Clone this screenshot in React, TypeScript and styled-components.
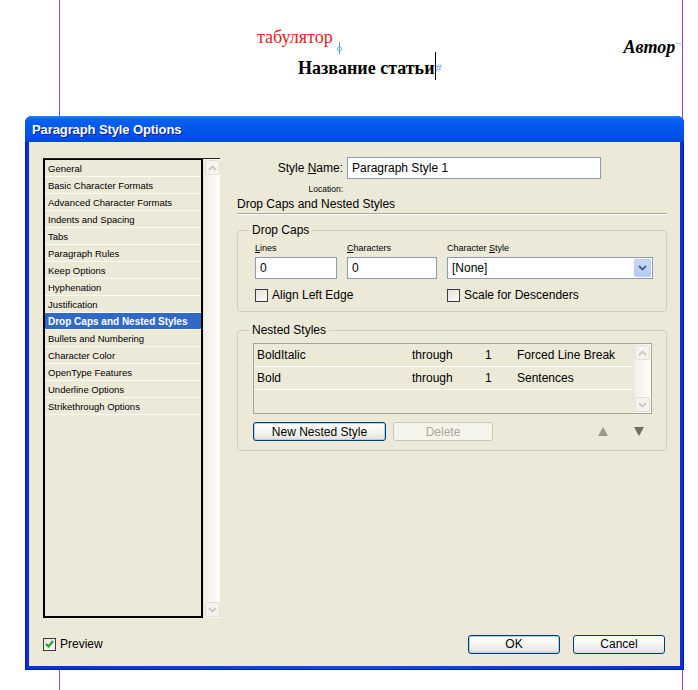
import styled, { createGlobalStyle } from "styled-components";

const SECTIONS = [
  "General",
  "Basic Character Formats",
  "Advanced Character Formats",
  "Indents and Spacing",
  "Tabs",
  "Paragraph Rules",
  "Keep Options",
  "Hyphenation",
  "Justification",
  "Drop Caps and Nested Styles",
  "Bullets and Numbering",
  "Character Color",
  "OpenType Features",
  "Underline Options",
  "Strikethrough Options",
];

const NESTED = [
  { style: "BoldItalic", mode: "through", count: "1", unit: "Forced Line Break" },
  { style: "Bold", mode: "through", count: "1", unit: "Sentences" },
];

const UI_FONT = `"Liberation Sans", Arial, sans-serif`;
const BEIGE = "#ECE9D8";

const GlobalStyle = createGlobalStyle`
  html, body {
    margin: 0;
    padding: 0;
    background: #fff;
  }
  body {
    width: 698px;
    height: 690px;
    overflow: hidden;
    font-family: ${UI_FONT};
  }
`;

const Page = styled.div`
  position: relative;
  width: 698px;
  height: 690px;
`;

/* the InDesign page behind the dialog */
const Sheet = styled.div`
  box-sizing: border-box;
  margin-left: 59px;
  width: 624px;
  height: 690px;
  border-left: 1px solid #8a46d8;
  border-right: 1px solid #8a46d8;
  padding-top: 27px;
  font-family: "Liberation Serif", "Times New Roman", serif;
`;

const TextLine = styled.div<{ $indent: number; $height?: number }>`
  display: flex;
  align-items: flex-start;
  padding-left: ${(p) => p.$indent}px;
  height: ${(p) => (p.$height ? `${p.$height}px` : "auto")};
`;

const TabText = styled.span`
  color: #e31b23;
  font-size: 18px;
  line-height: 20px;
`;

const TabMark = styled.span`
  display: block;
  margin: 15px 0 0 4px;
  line-height: 0;
`;

const Spacer = styled.div`
  flex: 1;
`;

const AuthorText = styled.span`
  margin-top: 10px;
  font-size: 18px;
  line-height: 20px;
  font-weight: bold;
  font-style: italic;
`;

const EndMark = styled.span`
  margin-top: 12px;
  color: #6fa0e8;
  font-size: 10px;
  line-height: 10px;
  padding-right: 1px;
`;

const TitleText = styled.span`
  font-size: 18px;
  line-height: 20px;
  font-weight: bold;
`;

const Caret = styled.span`
  display: block;
  width: 1px;
  height: 28px;
  margin-top: -6px;
  background: #000;
`;

const StoryEnd = styled.span`
  color: #7aa6ea;
  font-size: 12px;
  line-height: 20px;
  font-style: italic;
`;

/* the dialog window floating over the page */
const Window = styled.div`
  position: absolute;
  left: 25px;
  top: 116px;
  width: 659px;
  height: 554px;
  box-sizing: border-box;
  display: flex;
  flex-direction: column;
  padding: 0 4px 4px;
  border-radius: 7px 7px 0 0;
  background: linear-gradient(to right, #0831d9, #0a4ee0 50%, #0831d9);
  box-shadow: inset 1px 0 0 #0019cf, inset -1px 0 0 #001ea0, inset 0 -1px 0 #001ea0;
`;

const TitleBar = styled.div`
  height: 26px;
  margin: 0 -4px;
  padding: 0 7px;
  display: flex;
  align-items: center;
  border-radius: 7px 7px 0 0;
  background: linear-gradient(
    #2a83ff 0%,
    #0a62f0 12%,
    #0058ee 40%,
    #0054e6 70%,
    #0048d8 100%
  );
  color: #fff;
  font-family: ${UI_FONT};
  font-weight: bold;
  font-size: 13px;
  letter-spacing: -0.1px;
  text-shadow: 1px 1px 0 #0a1e8f;
`;

const Body = styled.div`
  flex: 1;
  display: flex;
  flex-direction: column;
  padding: 16px 13px 12px 14px;
  background: ${BEIGE};
  font-size: 12px;
  color: #000;
`;

const Main = styled.div`
  display: flex;
  gap: 17px;
  height: 460px;
`;

const Sidebar = styled.div`
  display: flex;
  width: 177px;
  border-top: 1px solid #222;
`;

const ListBox = styled.div`
  flex: 1;
  border: 2px solid #000;
  border-top-width: 1px;
  background: ${BEIGE};
`;

const ListRow = styled.div<{ $active?: boolean }>`
  box-sizing: border-box;
  height: 17px;
  padding-left: 3px;
  display: flex;
  align-items: center;
  border-bottom: 1px solid #fbfaf6;
  font-size: ${(p) => (p.$active ? "10px" : "9.5px")};
  white-space: nowrap;
  background: ${(p) => (p.$active ? "#316ac5" : "transparent")};
  color: ${(p) => (p.$active ? "#fff" : "#000")};
  font-weight: ${(p) => (p.$active ? "bold" : "normal")};
`;

const Scrollbar = styled.div<{ $width: number }>`
  width: ${(p) => p.$width}px;
  display: flex;
  flex-direction: column;
  justify-content: space-between;
  align-items: center;
  padding: 1px 0;
  box-sizing: border-box;
  background: linear-gradient(to right, #f1efe6, #fefefb);
  border-left: 1px solid #e8e6dc;
`;

const ScrollButton = styled.div`
  width: 15px;
  height: 15px;
  box-sizing: border-box;
  border: 1px solid #e2e0d6;
  border-radius: 2px;
  background: #f4f3ee;
  display: flex;
  align-items: center;
  justify-content: center;
`;

const Panel = styled.div`
  width: 430px;
  display: flex;
  flex-direction: column;
`;

const NameRow = styled.div`
  display: flex;
  align-items: center;
  gap: 4px;
  margin-top: -1px;
`;

const NameLabel = styled.span`
  width: 106px;
  text-align: right;
`;

const TextBox = styled.div<{ $width: number }>`
  box-sizing: border-box;
  width: ${(p) => p.$width}px;
  height: 22px;
  padding: 0 4px;
  display: flex;
  align-items: center;
  background: #fff;
  border: 1px solid #8c9cae;
  font-size: 12px;
  white-space: nowrap;
`;

const LocationRow = styled.div`
  margin-top: 5px;
  width: 106px;
  text-align: right;
  font-size: 8.5px;
  line-height: 10px;
`;

const Heading = styled.div`
  margin-top: 3px;
  line-height: 14px;
  padding-bottom: 2px;
  border-bottom: 1px solid #aca899;
  box-shadow: 0 1px 0 #fff;
`;

const Group = styled.div<{ $top: number; $left: number; $right: number; $bottom: number }>`
  margin-top: ${(p) => p.$top}px;
  padding: 0 ${(p) => p.$right}px ${(p) => p.$bottom}px ${(p) => p.$left}px;
  border: 1px solid #d0d0bf;
  border-radius: 4px;
  display: flex;
  flex-direction: column;
`;

const GroupTitle = styled.span<{ $shift: number }>`
  align-self: flex-start;
  margin: -8px 0 0 ${(p) => p.$shift}px;
  padding: 0 3px;
  line-height: 14px;
  background: ${BEIGE};
`;

const FieldRow = styled.div`
  display: flex;
  gap: 10px;
  margin-top: 6px;
`;

const Field = styled.div`
  display: flex;
  flex-direction: column;
  gap: 4px;
`;

const SmallLabel = styled.span`
  font-size: 9px;
  line-height: 10px;
`;

const SelectBox = styled.div`
  box-sizing: border-box;
  width: 206px;
  height: 22px;
  padding: 1px 1px 1px 4px;
  display: flex;
  align-items: center;
  justify-content: space-between;
  background: #fff;
  border: 1px solid #8c9cae;
`;

const DropButton = styled.div`
  width: 17px;
  height: 18px;
  box-sizing: border-box;
  border: 1px solid #b9c9ef;
  border-radius: 2px;
  background: linear-gradient(#c8d8fc, #b4c8f6);
  display: flex;
  align-items: center;
  justify-content: center;
`;

const CheckRow = styled.div`
  display: flex;
  margin-top: 8px;
  height: 16px;
  align-items: center;
`;

const CheckItem = styled.label<{ $width?: number }>`
  display: flex;
  align-items: center;
  gap: 4px;
  width: ${(p) => (p.$width ? `${p.$width}px` : "auto")};
`;

const CheckBox = styled.span`
  width: 13px;
  height: 13px;
  box-sizing: border-box;
  border: 1px solid #3b3b3b;
  background: linear-gradient(135deg, #e4e3dc, #fbfbf8);
  display: flex;
  align-items: center;
  justify-content: center;
`;

const Table = styled.div`
  margin-top: 6px;
  height: 71px;
  box-sizing: border-box;
  display: flex;
  border: 1px solid #a5a497;
  background: ${BEIGE};
`;

const TableRows = styled.div`
  flex: 1;
`;

const TableRow = styled.div`
  height: 23px;
  box-sizing: border-box;
  display: grid;
  grid-template-columns: 155px 73px 32px 1fr;
  align-items: center;
  padding-left: 3px;
  border-bottom: 1px solid #fff;
`;

const ButtonRow = styled.div`
  display: flex;
  align-items: center;
  gap: 7px;
  margin-top: 8px;
`;

const Button = styled.button<{ $width: number; $default?: boolean }>`
  width: ${(p) => p.$width}px;
  height: 19px;
  padding: 0;
  font-family: ${UI_FONT};
  font-size: 12px;
  color: #000;
  border: 1px solid #003c74;
  border-radius: 3px;
  background: linear-gradient(#ffffff, #f4f4f0 55%, #e3e0d6);
  box-shadow: ${(p) => (p.$default ? "inset 0 0 0 1px #b6cdf3" : "none")};

  &:disabled {
    color: #aca899;
    border-color: #cbc7b8;
    background: #f5f4ea;
  }
`;

const Arrows = styled.div`
  margin-left: auto;
  display: flex;
  gap: 26px;
  padding-right: 8px;
`;

const Footer = styled.div`
  margin-top: 16px;
  height: 20px;
  display: flex;
  align-items: center;
  justify-content: space-between;
`;

const FooterButtons = styled.div`
  display: flex;
  gap: 13px;
  margin-right: 2px;
`;

function Chevron({ up, color }: { up?: boolean; color: string }) {
  return (
    <svg width="9" height="6" viewBox="0 0 9 6">
      <path
        d={up ? "M1 5 L4.5 1.5 L8 5" : "M1 1 L4.5 4.5 L8 1"}
        fill="none"
        stroke={color}
        strokeWidth="1.8"
      />
    </svg>
  );
}

function Triangle({ up, color }: { up?: boolean; color: string }) {
  return (
    <svg width="10" height="9" viewBox="0 0 10 9">
      <polygon points={up ? "5,0 10,9 0,9" : "0,0 10,0 5,9"} fill={color} />
    </svg>
  );
}

function DisabledScrollbar({ width }: { width: number }) {
  return (
    <Scrollbar $width={width}>
      <ScrollButton>
        <Chevron up color="#c9c8c0" />
      </ScrollButton>
      <ScrollButton>
        <Chevron color="#c9c8c0" />
      </ScrollButton>
    </Scrollbar>
  );
}

export default function App() {
  return (
    <Page>
      <GlobalStyle />
      <Sheet>
        <TextLine $indent={197} $height={31}>
          <TabText>табулятор</TabText>
          <TabMark>
            <svg width="5" height="12" viewBox="0 0 5 12">
              <line x1="2.5" y1="0" x2="2.5" y2="12" stroke="#5d9be6" strokeWidth="1" />
              <polygon points="2.5,4 5,7 2.5,10 0,7" fill="none" stroke="#5d9be6" strokeWidth="0.8" />
            </svg>
          </TabMark>
          <Spacer />
          <AuthorText>Автор</AuthorText>
          <EndMark>¬</EndMark>
        </TextLine>
        <TextLine $indent={238}>
          <TitleText>Название статьи</TitleText>
          <Caret />
          <StoryEnd>#</StoryEnd>
        </TextLine>
      </Sheet>

      <Window>
        <TitleBar>Paragraph Style Options</TitleBar>
        <Body>
          <Main>
            <Sidebar>
              <ListBox>
                {SECTIONS.map((s) => (
                  <ListRow key={s} $active={s === "Drop Caps and Nested Styles"}>
                    {s}
                  </ListRow>
                ))}
              </ListBox>
              <DisabledScrollbar width={17} />
            </Sidebar>

            <Panel>
              <NameRow>
                <NameLabel>
                  Style <u>N</u>ame:
                </NameLabel>
                <TextBox $width={254}>Paragraph Style 1</TextBox>
              </NameRow>
              <LocationRow>Location:</LocationRow>
              <Heading>Drop Caps and Nested Styles</Heading>

              <Group $top={16} $left={17} $right={12} $bottom={8}>
                <GroupTitle $shift={-6}>Drop Caps</GroupTitle>
                <FieldRow>
                  <Field>
                    <SmallLabel>
                      <u>L</u>ines
                    </SmallLabel>
                    <TextBox $width={82}>0</TextBox>
                  </Field>
                  <Field>
                    <SmallLabel>
                      <u>C</u>haracters
                    </SmallLabel>
                    <TextBox $width={90}>0</TextBox>
                  </Field>
                  <Field>
                    <SmallLabel>
                      Character <u>S</u>tyle
                    </SmallLabel>
                    <SelectBox>
                      [None]
                      <DropButton>
                        <Chevron color="#4d6185" />
                      </DropButton>
                    </SelectBox>
                  </Field>
                </FieldRow>
                <CheckRow>
                  <CheckItem $width={192}>
                    <CheckBox />
                    Align Left Edge
                  </CheckItem>
                  <CheckItem>
                    <CheckBox />
                    Scale for Descenders
                  </CheckItem>
                </CheckRow>
              </Group>

              <Group $top={18} $left={15} $right={14} $bottom={9}>
                <GroupTitle $shift={-4}>Nested Styles</GroupTitle>
                <Table>
                  <TableRows>
                    {NESTED.map((n) => (
                      <TableRow key={n.style}>
                        <span>{n.style}</span>
                        <span>{n.mode}</span>
                        <span>{n.count}</span>
                        <span>{n.unit}</span>
                      </TableRow>
                    ))}
                  </TableRows>
                  <DisabledScrollbar width={18} />
                </Table>
                <ButtonRow>
                  <Button $width={133} $default>
                    New Nested Style
                  </Button>
                  <Button $width={100} disabled>
                    Delete
                  </Button>
                  <Arrows>
                    <Triangle up color="#9a998f" />
                    <Triangle color="#6f6e66" />
                  </Arrows>
                </ButtonRow>
              </Group>
            </Panel>
          </Main>

          <Footer>
            <CheckItem>
              <CheckBox>
                <svg width="9" height="8" viewBox="0 0 9 8">
                  <path d="M1 4 L3.5 6.5 L8 1" fill="none" stroke="#21a121" strokeWidth="2" />
                </svg>
              </CheckBox>
              Preview
            </CheckItem>
            <FooterButtons>
              <Button $width={92} $default>
                OK
              </Button>
              <Button $width={92}>Cancel</Button>
            </FooterButtons>
          </Footer>
        </Body>
      </Window>
    </Page>
  );
}
